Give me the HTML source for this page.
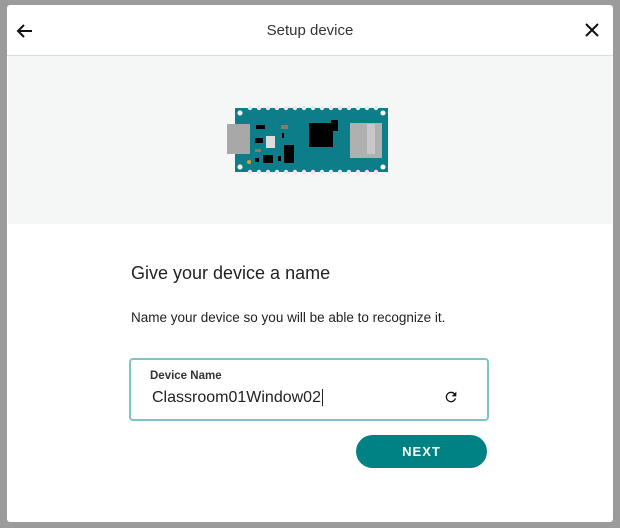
<!DOCTYPE html>
<html><head><style>
body{margin:0;width:620px;height:528px;background:#9b9b9b;font-family:"Liberation Sans",sans-serif;overflow:hidden;position:relative}
.panel{position:absolute;left:7px;top:5px;width:606px;height:517px;background:#fff;border-radius:3px}
.hdr{position:absolute;left:0;top:0;width:606px;height:50px;border-bottom:1px solid #dcdcdc}
.title{position:absolute;left:0;right:0;top:17px;text-align:center;font-size:15px;color:#333}
.gray{position:absolute;left:1px;top:51px;width:604px;height:168px;background:#f5f6f6}
.abs{position:absolute}
h2{position:absolute;left:124px;top:258px;margin:0;font-weight:normal;font-size:18px;color:#222}
.sub{position:absolute;left:124px;top:305px;font-size:13.5px;color:#222}
.inp{position:absolute;left:122px;top:353px;width:356px;height:59px;border:2px solid #7cc4c6;border-radius:4px}
.lbl{position:absolute;left:19px;top:10px;font-size:11.5px;font-weight:bold;color:#333}
.val{position:absolute;left:21px;top:29px;font-size:16px;color:#222}
.btn{position:absolute;left:349px;top:430px;width:131px;height:33px;background:#008184;border-radius:17px;color:#fff;font-weight:bold;font-size:13px;letter-spacing:1px;text-align:center;line-height:33px}
</style></head><body>
<div class="panel">
<div class="hdr">
<svg class="abs" style="left:8px;top:16px" width="20" height="20" viewBox="0 0 20 20"><path d="M17 10H3M9 4L3 10L9 16" fill="none" stroke="#111" stroke-width="2"/></svg>
<div class="title">Setup device</div>
<svg class="abs" style="left:577px;top:17px" width="16" height="16" viewBox="0 0 16 16"><path d="M2 2L14 14M14 2L2 14" stroke="#111" stroke-width="2"/></svg>
</div>
<div class="gray">
<svg class="abs" style="left:218px;top:49px" width="162" height="70" viewBox="0 0 162 70">
<rect x="9" y="3" width="153" height="64" fill="#0d7d8a"/>
<g fill="#fff">
<circle cx="14" cy="8" r="2.5"/><circle cx="157" cy="8" r="2.5"/><circle cx="14" cy="62" r="2.5"/><circle cx="157" cy="62" r="2.5"/>
</g>
<g fill="#e8e8e8">
<circle cx="24" cy="3" r="2.2"/><circle cx="33" cy="3" r="2.2"/><circle cx="42" cy="3" r="2.2"/><circle cx="51" cy="3" r="2.2"/><circle cx="60" cy="3" r="2.2"/><circle cx="69" cy="3" r="2.2"/><circle cx="78" cy="3" r="2.2"/><circle cx="87" cy="3" r="2.2"/><circle cx="96" cy="3" r="2.2"/><circle cx="105" cy="3" r="2.2"/><circle cx="114" cy="3" r="2.2"/><circle cx="123" cy="3" r="2.2"/><circle cx="132" cy="3" r="2.2"/><circle cx="141" cy="3" r="2.2"/><circle cx="150" cy="3" r="2.2"/>
<circle cx="24" cy="67" r="2.2"/><circle cx="33" cy="67" r="2.2"/><circle cx="42" cy="67" r="2.2"/><circle cx="51" cy="67" r="2.2"/><circle cx="60" cy="67" r="2.2"/><circle cx="69" cy="67" r="2.2"/><circle cx="78" cy="67" r="2.2"/><circle cx="87" cy="67" r="2.2"/><circle cx="96" cy="67" r="2.2"/><circle cx="105" cy="67" r="2.2"/><circle cx="114" cy="67" r="2.2"/><circle cx="123" cy="67" r="2.2"/><circle cx="132" cy="67" r="2.2"/><circle cx="141" cy="67" r="2.2"/><circle cx="150" cy="67" r="2.2"/>
</g>
<rect x="1" y="19" width="23" height="30" fill="#a8a8a8"/>
<rect x="83" y="18" width="24" height="24" fill="#000"/>
<rect x="105" y="15" width="7" height="11" fill="#000"/>
<rect x="124" y="18" width="32" height="35" fill="#b0b0b0"/>
<rect x="141" y="19" width="8" height="30" fill="#c8c8c8"/>
<rect x="30" y="20" width="9" height="4" fill="#000"/>
<rect x="55" y="20" width="7" height="4" fill="#8a7a6a"/>
<rect x="56" y="28" width="2" height="5" fill="#000"/>
<rect x="29" y="33" width="8" height="5" fill="#000"/>
<rect x="40" y="31" width="9" height="12" fill="#ddd"/>
<rect x="29" y="44" width="6" height="3" fill="#8a7a6a"/>
<rect x="37" y="50" width="10" height="8" fill="#000"/>
<rect x="58" y="40" width="10" height="18" fill="#000"/>
<rect x="52" y="51" width="3" height="5" fill="#000"/>
<rect x="29" y="53" width="4" height="4" fill="#000"/>
<circle cx="23" cy="57" r="2" fill="#e0a020"/>
</svg>
</div>
<h2>Give your device a name</h2>
<div class="sub">Name your device so you will be able to recognize it.</div>
<div class="inp">
<div class="lbl">Device Name</div>
<div class="val">Classroom01Window02<span style="border-left:1px solid #222;margin-left:1px"></span></div>
<svg class="abs" style="left:312px;top:29px" width="16" height="16" viewBox="0 0 24 24"><path d="M17.65 6.35A7.95 7.95 0 0 0 12 4a8 8 0 1 0 7.75 10h-2.08A6 6 0 1 1 12 6c1.66 0 3.14.69 4.22 1.78L13 11h7V4z" fill="#111"/></svg>
</div>
<div class="btn">NEXT</div>
</div>
</body></html>
